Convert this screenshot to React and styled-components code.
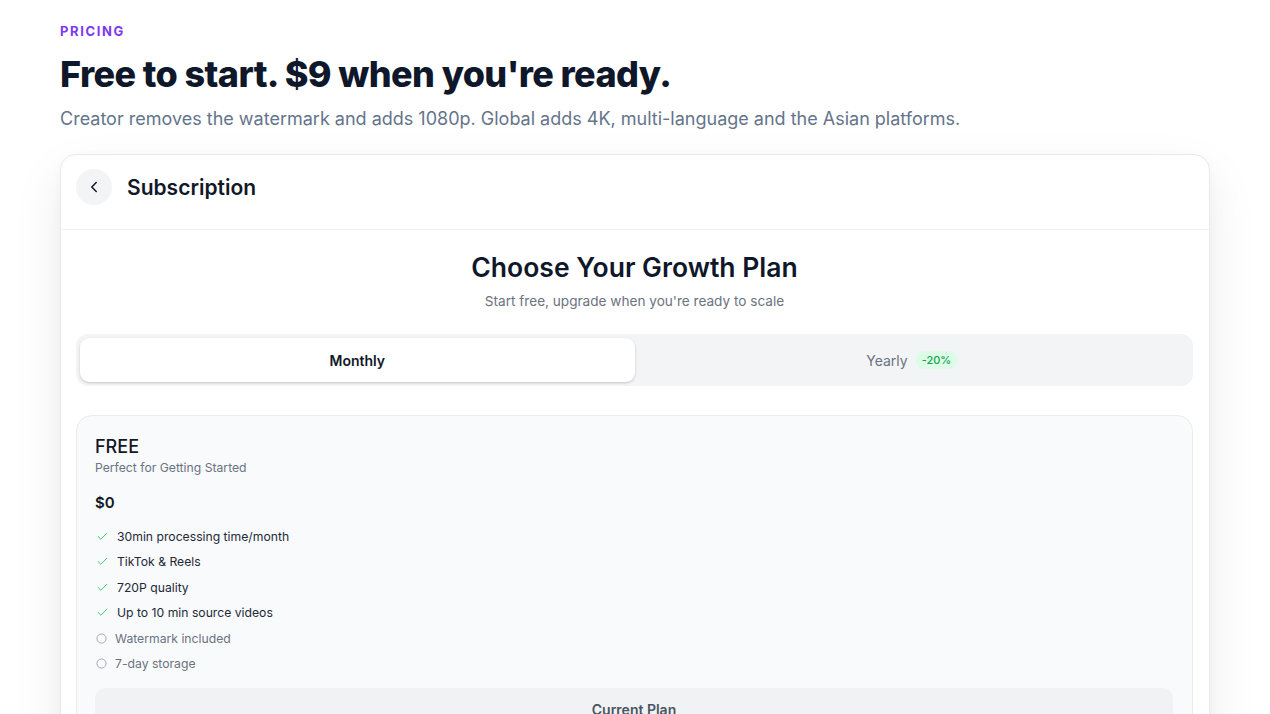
import React, { useState } from "react";
import styled, { createGlobalStyle } from "styled-components";

const GlobalStyle = createGlobalStyle`
  html, body {
    margin: 0;
    padding: 0;
    background: #ffffff;
    font-family: Inter, "Noto Sans", "Liberation Sans", sans-serif;
    -webkit-font-smoothing: antialiased;
  }
  * { box-sizing: border-box; }
`;

const Page = styled.main`
  padding: 23px 60px 0;
`;

const Eyebrow = styled.div`
  font-size: 13px;
  line-height: 16px;
  font-weight: 700;
  letter-spacing: 1.6px;
  color: #7c3aed;
`;

const Headline = styled.h1`
  margin: 13px 0 0;
  font-size: 36px;
  line-height: 44px;
  font-weight: 800;
  letter-spacing: -0.6px;
  color: #0f172a;
`;

const Lead = styled.p`
  margin: 9px 0 0;
  font-size: 18px;
  line-height: 28px;
  color: #64748b;
`;

const Shell = styled.section`
  margin-top: 21px;
  background: #fff;
  border: 1px solid #e8e9ec;
  border-radius: 16px;
  box-shadow: 0 20px 50px rgba(15, 23, 42, 0.08), 0 4px 12px rgba(15, 23, 42, 0.03);
  overflow: hidden;
`;

const ShellHeader = styled.header`
  display: flex;
  align-items: center;
  gap: 15px;
  padding: 14px 16px 24px 15px;
  border-bottom: 1px solid #f1f2f4;
`;

const BackButton = styled.button`
  width: 36px;
  height: 36px;
  border-radius: 50%;
  border: none;
  background: #f3f4f6;
  display: flex;
  align-items: center;
  justify-content: center;
  color: #111827;
  padding: 0;
  cursor: pointer;
`;

const ShellTitle = styled.h2`
  margin: 0;
  font-size: 21px;
  font-weight: 600;
  color: #111827;
`;

const ShellBody = styled.div`
  padding: 21px 16px 0 15px;
`;

const PlanHeading = styled.h3`
  margin: 0;
  text-align: center;
  font-size: 26.5px;
  line-height: 32px;
  font-weight: 600;
  color: #0f172a;
`;

const PlanSub = styled.p`
  margin: 8px 0 0;
  text-align: center;
  font-size: 13.6px;
  line-height: 20px;
  color: #6b7280;
`;

const Toggle = styled.div`
  margin-top: 23px;
  display: grid;
  grid-template-columns: 1fr 1fr;
  padding: 4px;
  background: #f3f4f6;
  border-radius: 12px;
`;

const ToggleTab = styled.button`
  height: 44px;
  border: none;
  border-radius: 9px;
  display: flex;
  align-items: center;
  justify-content: center;
  gap: 8px;
  font-family: inherit;
  font-size: 14px;
  font-weight: ${(p) => (p.$active ? 600 : 400)};
  color: ${(p) => (p.$active ? "#111827" : "#6b7280")};
  background: ${(p) => (p.$active ? "#ffffff" : "transparent")};
  box-shadow: ${(p) =>
    p.$active ? "0 1px 3px rgba(0,0,0,0.12), 0 1px 2px rgba(0,0,0,0.08)" : "none"};
  cursor: pointer;
`;

const Badge = styled.span`
  font-size: 11px;
  line-height: 16px;
  padding: 1px 6px;
  border-radius: 8px;
  background: #dcfce7;
  color: #16a34a;
  font-weight: 500;
`;

const PlanCard = styled.article`
  margin-top: 29px;
  background: #f8fafc;
  border: 1px solid #e9ebef;
  border-radius: 16px;
  padding: 19px 19px 20px 18px;
`;

const PlanName = styled.div`
  font-size: 18px;
  line-height: 24px;
  font-weight: 500;
  color: #111827;
`;

const PlanTag = styled.div`
  font-size: 12.2px;
  line-height: 18px;
  color: #6b7280;
`;

const Price = styled.div`
  margin-top: 16px;
  font-size: 15px;
  line-height: 20px;
  font-weight: 600;
  color: #111827;
`;

const Features = styled.ul`
  list-style: none;
  margin: 14px 0 0;
  padding: 0;
  display: flex;
  flex-direction: column;
  gap: 7.5px;
`;

const Feature = styled.li`
  display: flex;
  align-items: center;
  gap: 8px;
  height: 18px;
  font-size: 12.2px;
  color: ${(p) => (p.$on ? "#1f2937" : "#6b7280")};
`;

const IconSlot = styled.span`
  width: ${(p) => (p.$on ? "14px" : "12px")};
  padding-left: 1px;
  display: flex;
  align-items: center;
  justify-content: flex-start;
  flex-shrink: 0;
`;

const PlanButton = styled.button`
  margin-top: 15px;
  width: 100%;
  height: 44px;
  border: none;
  border-radius: 10px;
  background: #f1f2f4;
  font-family: inherit;
  font-size: 14px;
  font-weight: 600;
  color: #4b5563;
`;

const features = [
  { label: "30min processing time/month", on: true },
  { label: "TikTok & Reels", on: true },
  { label: "720P quality", on: true },
  { label: "Up to 10 min source videos", on: true },
  { label: "Watermark included", on: false },
  { label: "7-day storage", on: false },
];

function Check() {
  return (
    <svg width="13" height="13" viewBox="0 0 24 24" fill="none" stroke="#22c55e" strokeWidth="1.6" strokeLinecap="round" strokeLinejoin="round">
      <path d="M20 6 9 17l-5-5" />
    </svg>
  );
}

function Ring() {
  return (
    <svg width="11" height="11" viewBox="0 0 12 12" fill="none" stroke="#9ca3af" strokeWidth="1">
      <circle cx="6" cy="6" r="5" />
    </svg>
  );
}

export default function App() {
  const [billing, setBilling] = useState("monthly");

  return (
    <>
      <GlobalStyle />
      <Page>
        <Eyebrow>PRICING</Eyebrow>
        <Headline>Free to start. $9 when you're ready.</Headline>
        <Lead>
          Creator removes the watermark and adds 1080p. Global adds 4K, multi-language and the Asian platforms.
        </Lead>

        <Shell>
          <ShellHeader>
            <BackButton aria-label="Back">
              <svg width="18" height="18" viewBox="0 0 24 24" fill="none" stroke="currentColor" strokeWidth="2" strokeLinecap="round" strokeLinejoin="round">
                <path d="m15 18-6-6 6-6" />
              </svg>
            </BackButton>
            <ShellTitle>Subscription</ShellTitle>
          </ShellHeader>

          <ShellBody>
            <PlanHeading>Choose Your Growth Plan</PlanHeading>
            <PlanSub>Start free, upgrade when you're ready to scale</PlanSub>

            <Toggle>
              <ToggleTab $active={billing === "monthly"} onClick={() => setBilling("monthly")}>
                Monthly
              </ToggleTab>
              <ToggleTab $active={billing === "yearly"} onClick={() => setBilling("yearly")}>
                Yearly <Badge>-20%</Badge>
              </ToggleTab>
            </Toggle>

            <PlanCard>
              <PlanName>FREE</PlanName>
              <PlanTag>Perfect for Getting Started</PlanTag>
              <Price>$0</Price>
              <Features>
                {features.map((f) => (
                  <Feature key={f.label} $on={f.on}>
                    <IconSlot $on={f.on}>{f.on ? <Check /> : <Ring />}</IconSlot>
                    {f.label}
                  </Feature>
                ))}
              </Features>
              <PlanButton>Current Plan</PlanButton>
            </PlanCard>
          </ShellBody>
        </Shell>
      </Page>
    </>
  );
}
